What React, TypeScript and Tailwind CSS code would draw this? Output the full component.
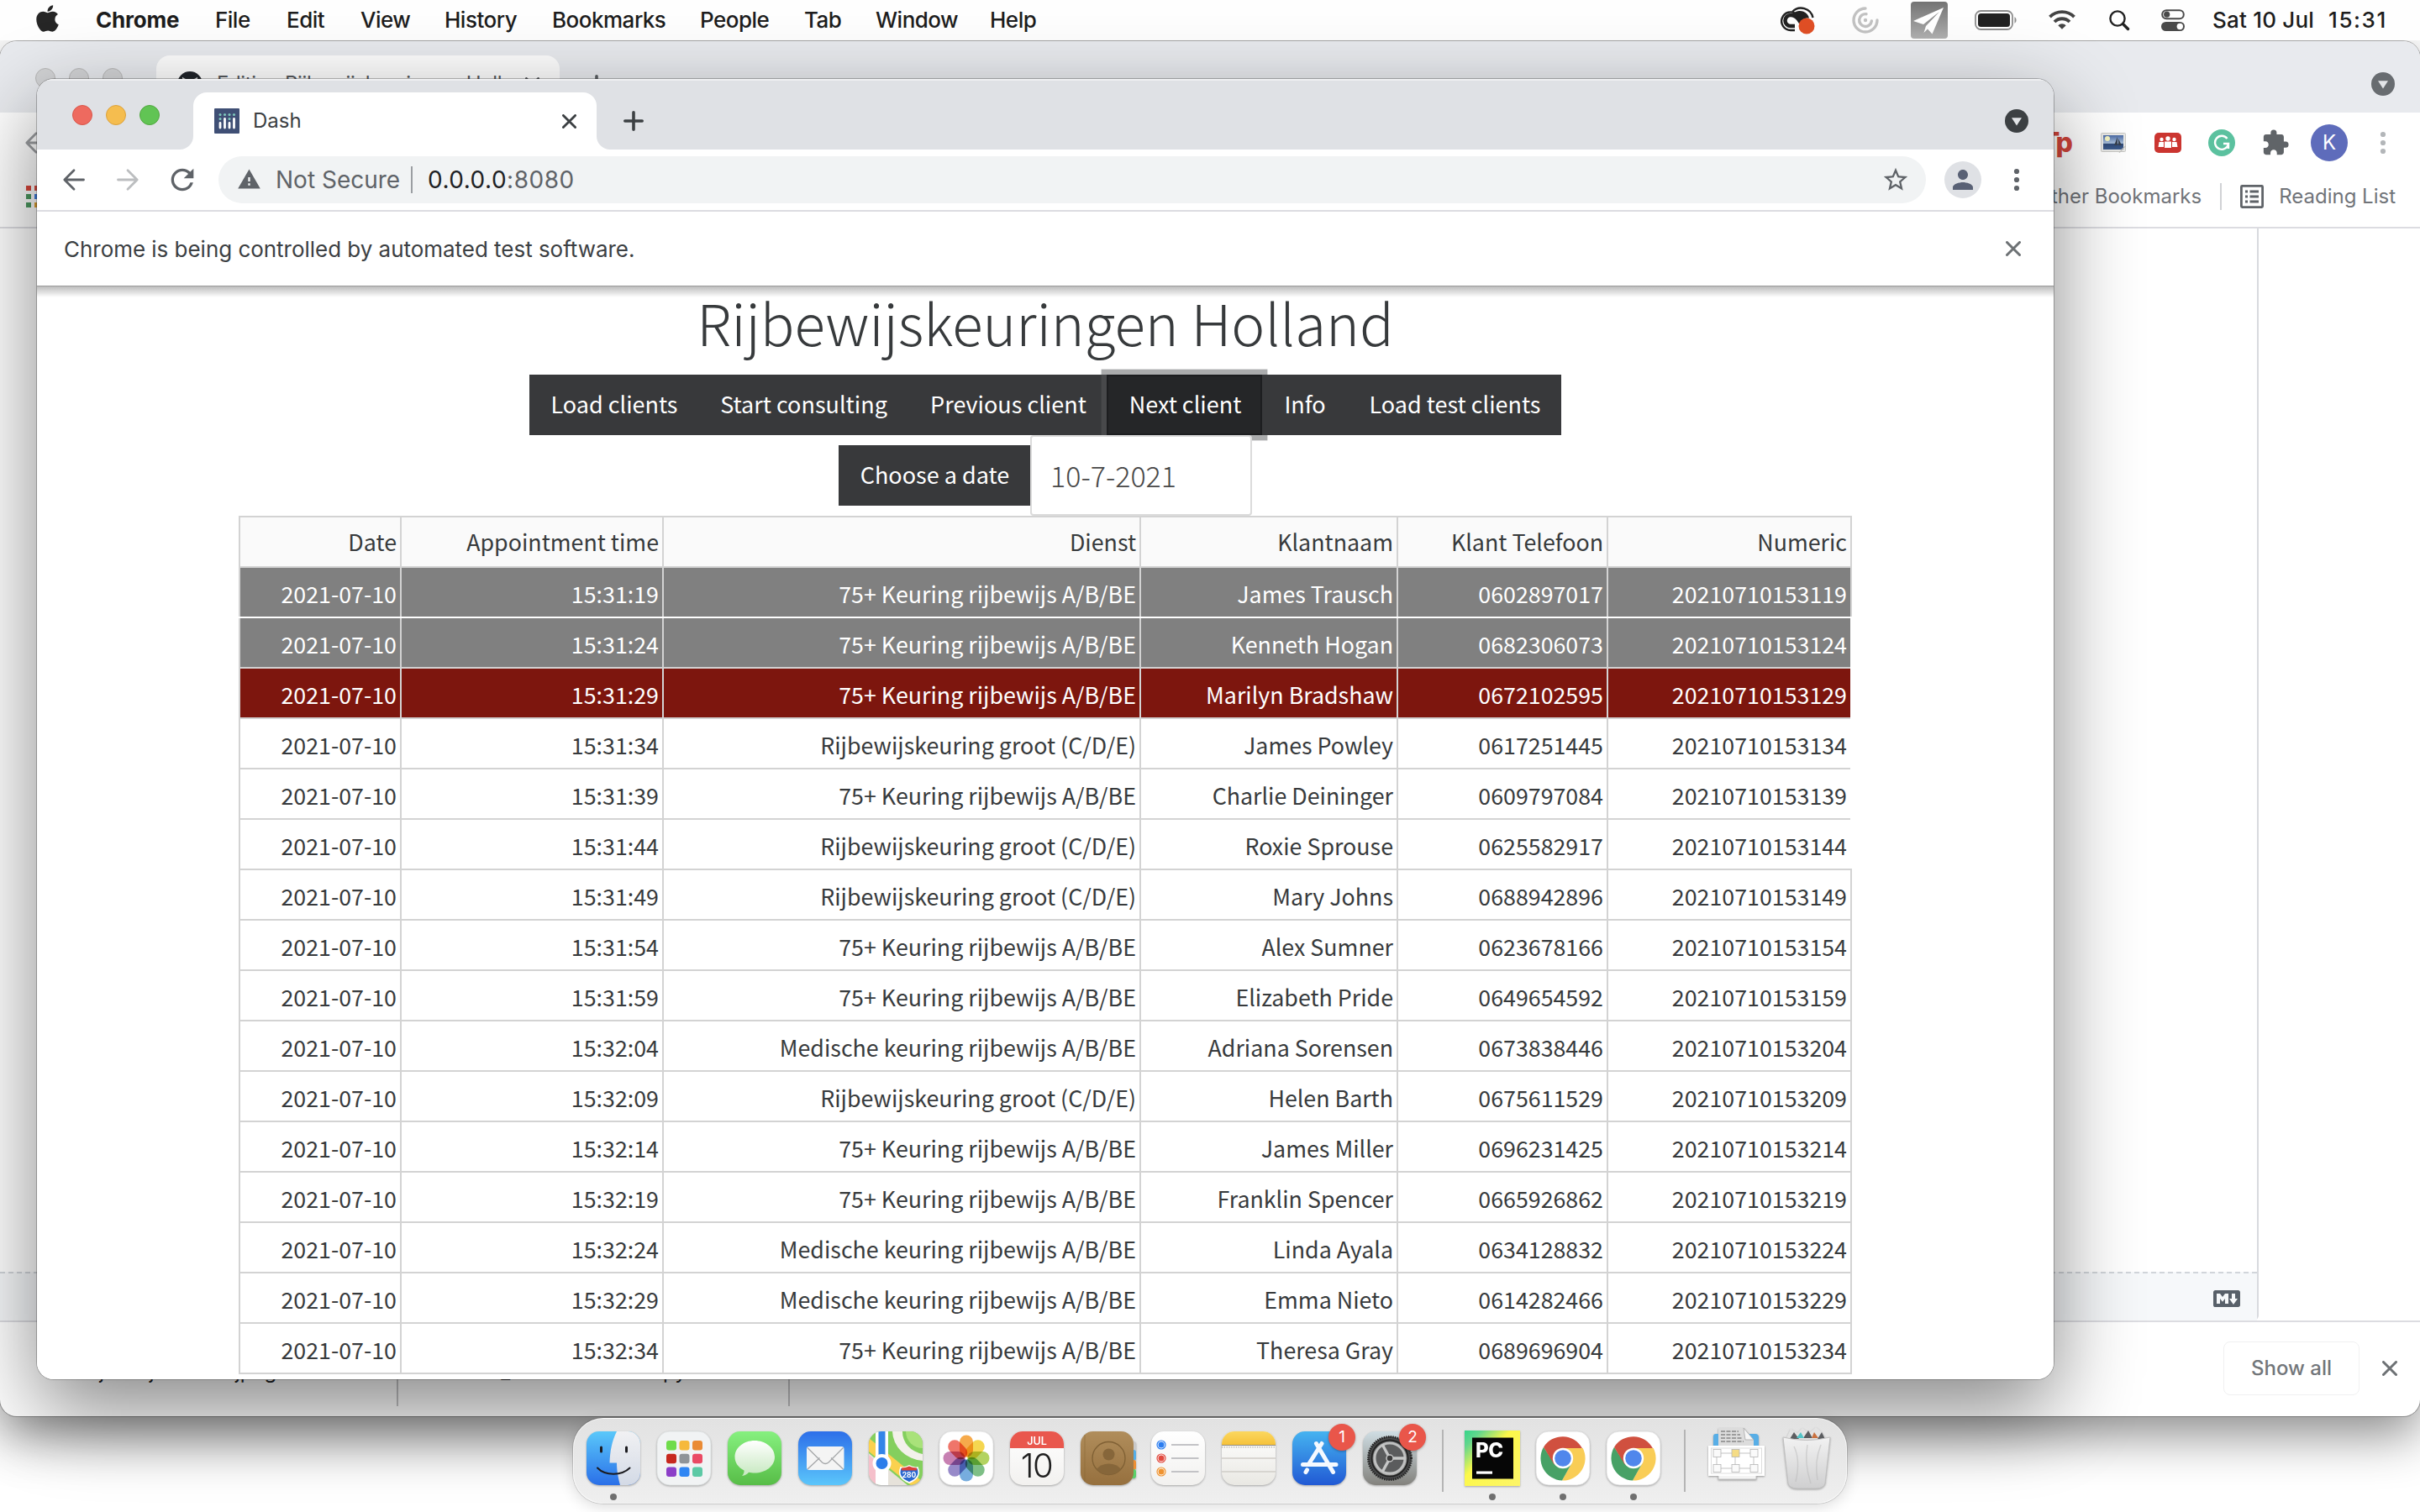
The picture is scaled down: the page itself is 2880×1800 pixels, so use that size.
import React from "react";
import { FaApple } from "react-icons/fa";
import { MdExtension, MdPerson, MdRefresh, MdStarBorder, MdWarning } from "react-icons/md";

const menus: [string, string][] = [
  ["File", "w-[85px]"],
  ["Edit", "w-[88px]"],
  ["View", "w-[100px]"],
  ["History", "w-[128px]"],
  ["Bookmarks", "w-[176px]"],
  ["People", "w-[124px]"],
  ["Tab", "w-[85px]"],
  ["Window", "w-[136px]"],
  ["Help", "w-[80px]"],
];

const A = "75+ Keuring rijbewijs A/B/BE";
const B = "Rijbewijskeuring groot (C/D/E)";
const C = "Medische keuring rijbewijs A/B/BE";

const rows: [string, string, string, string][] = [
  ["15:31:19", A, "James Trausch", "0602897017"],
  ["15:31:24", A, "Kenneth Hogan", "0682306073"],
  ["15:31:29", A, "Marilyn Bradshaw", "0672102595"],
  ["15:31:34", B, "James Powley", "0617251445"],
  ["15:31:39", A, "Charlie Deininger", "0609797084"],
  ["15:31:44", B, "Roxie Sprouse", "0625582917"],
  ["15:31:49", B, "Mary Johns", "0688942896"],
  ["15:31:54", A, "Alex Sumner", "0623678166"],
  ["15:31:59", A, "Elizabeth Pride", "0649654592"],
  ["15:32:04", C, "Adriana Sorensen", "0673838446"],
  ["15:32:09", B, "Helen Barth", "0675611529"],
  ["15:32:14", A, "James Miller", "0696231425"],
  ["15:32:19", A, "Franklin Spencer", "0665926862"],
  ["15:32:24", C, "Linda Ayala", "0634128832"],
  ["15:32:29", C, "Emma Nieto", "0614282466"],
  ["15:32:34", A, "Theresa Gray", "0689696904"],
];

function Cross({ size, className, w = 3 }: { size: number; className?: string; w?: number }) {
  return (
    <svg width={size} height={size} viewBox="0 0 18 18" className={className} fill="none" stroke="currentColor" strokeWidth={w} strokeLinecap="round">
      <path d="M1.5 1.5 16.5 16.5M16.5 1.5 1.5 16.5" />
    </svg>
  );
}

function Plus({ className }: { className?: string }) {
  return (
    <svg width="24" height="24" viewBox="0 0 24 24" className={className} fill="none" stroke="currentColor" strokeWidth="3.6" strokeLinecap="round">
      <path d="M12 1.8v20.4M1.8 12h20.4" />
    </svg>
  );
}

function Caret({ fill }: { fill: string }) {
  return (
    <svg width="28" height="28" viewBox="0 0 28 28">
      <circle cx="14" cy="14" r="14" fill={fill} />
      <path d="M8 10.2h12L14 19.5z" fill="#e3e5e8" />
    </svg>
  );
}

function Dots({ color }: { color: string }) {
  return (
    <svg width="8" height="28" viewBox="0 0 8 28" fill={color}>
      <circle cx="4" cy="4" r="3.1" />
      <circle cx="4" cy="14" r="3.1" />
      <circle cx="4" cy="24" r="3.1" />
    </svg>
  );
}

function BackArrow({ color, flip }: { color: string; flip?: boolean }) {
  return (
    <svg width="28" height="28" viewBox="0 0 28 28" fill="none" stroke={color} strokeWidth="2.8" strokeLinecap="round" strokeLinejoin="round" className={flip ? "-scale-x-100" : ""}>
      <path d="M25.5 14H3M14 2.8 2.8 14 14 25.2" />
    </svg>
  );
}

function MenuBar() {
  return (
    <div className="flex h-12 w-full items-center bg-[#fefefe] text-[26px] font-medium tracking-[-0.5px] text-[#1d1d1d]">
      <FaApple className="ml-[43px] h-[36px] w-[27px] -translate-y-[2px] text-[#262626]" />
      <span className="mt-[-2px] ml-[44px] w-[142px] font-bold tracking-[-0.2px]">Chrome</span>
      {menus.map(([m, w]) => (
        <span key={m} className={`mt-[-2px] ${w}`}>
          {m}
        </span>
      ))}
      <div className="ml-[861px] flex items-center">
        <svg width="42" height="34" viewBox="0 0 42 34" className="translate-y-[1px]">
          <g fill="none" stroke="#222" strokeWidth="2.4">
            <path d="M14 6A14.5 14.5 0 0 1 38.5 13" />
            <path d="M17 28H12A10.8 10.8 0 1 1 19 9" />
          </g>
          <path d="M17 6.5A11.5 11.5 0 0 1 34 13.5C30 13 26 15 24 18L20 12.5C17 9 12 10 12 10Z" fill="#222" />
          <path d="M17 23H12A6.5 6.5 0 0 1 12 10C19 9.500 22 16 24 19" fill="none" stroke="#222" strokeWidth="4.500" />
          <path d="M11.500 13A4 4 0 0 0 11.500 20H16L12.500 16Z" fill="#fff" />
          <circle cx="31" cy="23" r="9.500" fill="#e04f25" />
        </svg>
        <svg width="32" height="32" viewBox="0 0 32 32" className="ml-[43px]" fill="none" stroke="#c2c2c2" strokeWidth="3.400" strokeLinecap="round">
          <path d="M16 2A14 14 0 1 0 30 16" />
          <path d="M17 8.700A7.400 7.400 0 1 0 23.400 17" />
          <circle cx="16" cy="16" r="2.200" fill="#c2c2c2" stroke="none" />
        </svg>
        <svg width="44" height="44" viewBox="0 0 44 44" className="ml-[38px]">
          <defs>
            <linearGradient id="pl" x1="0" y1="0" x2="0" y2="1">
              <stop offset="0" stopColor="#737373" />
              <stop offset="1" stopColor="#b0b0b0" />
            </linearGradient>
          </defs>
          <rect width="44" height="44" rx="4" fill="url(#pl)" />
          <path d="M39 7 3 23l12 4L34 12 18 29l-2.500 8 4.500-4.500 5.500 6z" fill="#fff" />
        </svg>
        <svg width="51" height="24" viewBox="0 0 51 24" className="ml-[32px]">
          <rect x="1" y="1" width="44" height="22" rx="6.500" fill="none" stroke="#8d8d8d" strokeWidth="1.800" />
          <rect x="4" y="4" width="38" height="16" rx="3.500" fill="#222" />
          <path d="M47.500 8a4.800 4.800 0 0 1 0 8z" fill="#8d8d8d" />
        </svg>
        <svg width="32" height="24" viewBox="0 0 32 24" className="mt-[-2px] ml-[37px]" fill="none" stroke="#444" strokeWidth="3.800">
          <path d="M1.500 9.200A20.500 20.500 0 0 1 30.500 9.200" />
          <path d="M7 15A12.700 12.700 0 0 1 25 15" />
          <path d="M11.300 19.200A6.600 6.600 0 0 1 20.700 19.200L16 23.800Z" fill="#444" stroke="none" />
        </svg>
        <svg width="25" height="25" viewBox="0 0 25 25" className="ml-[40px]" fill="none" stroke="#222" strokeLinecap="round">
          <circle cx="10" cy="10" r="8.600" strokeWidth="2.400" />
          <path d="M16.500 16.500 22.500 22.500" strokeWidth="3.400" />
        </svg>
        <svg width="28" height="26" viewBox="0 0 28 26" className="ml-[37px]">
          <rect x="1.200" y="1.200" width="25.600" height="10" rx="5" fill="none" stroke="#4a4a4a" strokeWidth="2" />
          <circle cx="6.700" cy="6.200" r="3.600" fill="#4a4a4a" />
          <rect y="15" width="28" height="11" rx="5.500" fill="#4a4a4a" />
          <circle cx="22.300" cy="20.500" r="3.700" fill="#fff" />
        </svg>
        <span className="mt-[-2px] ml-[33px] w-[138px] tracking-[0.2px] whitespace-nowrap">Sat 10 Jul</span>
        <span className="mt-[-2px] tracking-[1.6px]">15:31</span>
      </div>
    </div>
  );
}

function Flare({ right, color }: { right?: boolean; color: string }) {
  return (
    <svg width="16" height="16" viewBox="0 0 16 16" className={right ? "absolute bottom-0 -right-4 -scale-x-100" : "absolute bottom-0 -left-4"}>
      <path d="M16 0V16H0A16 16 0 0 0 16 0Z" fill={color} />
    </svg>
  );
}

function BackWindow() {
  return (
    <div className="absolute top-[49px] left-0 flex h-[1637px] w-[2880px] flex-col overflow-hidden rounded-[20px] bg-white shadow-[0_0_0_1px_rgba(0,0,0,0.28),0_22px_60px_rgba(0,0,0,0.46)]">
      <div className="flex h-[85px] shrink-0 items-start bg-[#e8eaee]">
        <div className="mt-[32px] ml-[42px] flex gap-4">
          <i className="size-6 rounded-full border border-[#b8b8b8] bg-[#d3d4d6]" />
          <i className="size-6 rounded-full border border-[#b8b8b8] bg-[#d3d4d6]" />
          <i className="size-6 rounded-full border border-[#b8b8b8] bg-[#d3d4d6]" />
        </div>
        <div className="mt-[17px] ml-[40px] flex h-[68px] w-[480px] items-center rounded-t-[16px] bg-[#fdfdfd] pl-[25px] text-[24px] text-[#55585c]">
          <svg width="30" height="30" viewBox="0 0 30 30">
            <circle cx="15" cy="15" r="15" fill="#20242a" />
            <path d="M6 7l5 2.500q4-1 8 0L24 7v8q0 7-9 7t-9-7z" fill="#fff" />
          </svg>
          <span className="ml-[17px] tracking-[-0.4px] whitespace-nowrap">Editing Rijbewijskeuringen-Holl</span>
          <Cross size={17} className="mr-[24px] ml-auto" />
        </div>
        <Plus className="mt-[40px] ml-[32px] text-[#5b5e62]" />
        <div className="mt-[37px] mr-[30px] ml-auto">
          <Caret fill="#686c70" />
        </div>
      </div>
      <div className="flex h-[72px] shrink-0 items-center pr-[40px] pl-[29px]">
        <BackArrow color="#9b9da0" />
        <span className="ml-auto text-[32px] font-extrabold tracking-[-3px] text-[#d2453a]">Tp</span>
        <svg width="30" height="24" viewBox="0 0 30 24" className="ml-[36px]">
          <defs>
            <linearGradient id="sea" x1="0" y1="0" x2="0" y2="1">
              <stop offset="0" stopColor="#4a6aa5" />
              <stop offset=".55" stopColor="#a9c0dc" />
              <stop offset=".62" stopColor="#2f4a78" />
              <stop offset="1" stopColor="#3d5c8e" />
            </linearGradient>
          </defs>
          <rect x=".5" y=".5" width="29" height="22" rx="1" fill="#e9e9e6" stroke="#c9c9c6" />
          <rect x="3" y="3" width="24" height="17" fill="url(#sea)" />
          <circle cx="8" cy="7" r="3" fill="#f4f3c0" />
          <path d="M20 5v10h-4zM21 7l4 8h-4z" fill="#39424f" />
          <path d="M29.500 16 22 23.500q4-1 3-4z" fill="#f7f7f5" stroke="#b5b5b2" strokeWidth=".7" />
        </svg>
        <svg width="32" height="24" viewBox="0 0 32 24" className="ml-[34px]">
          <rect width="32" height="24" rx="5" fill="#cb3530" />
          <g fill="#fff">
            <circle cx="16" cy="7" r="2.700" />
            <circle cx="8.500" cy="8" r="2.200" />
            <circle cx="23.500" cy="8" r="2.200" />
            <path d="M12 10.500h8V18h-8zM4.500 17l1-6h5.500v6zM27.500 17l-1-6H21v6z" />
          </g>
        </svg>
        <span className="ml-[32px] flex size-8 items-center justify-center rounded-full bg-[#5bc19f]">
          <svg width="20" height="20" viewBox="0 0 20 20" fill="none" stroke="#fff" strokeWidth="2.400">
            <path d="M16.500 5A8 8 0 1 0 18 11H12M18 17V11" />
          </svg>
        </span>
        <MdExtension className="ml-[31px] size-[34px] text-[#606468]" />
        <span className="ml-[25px] flex size-11 items-center justify-center rounded-full bg-[#5e6cbb] text-[24px] text-white">K</span>
        <span className="ml-[38px]">
          <Dots color="#b3b6b9" />
        </span>
      </div>
      <div className="flex h-[66px] shrink-0 items-center border-b-2 border-[#dcdce1] pb-[8px] pl-[31px] text-[24px] text-[#717479]">
        <div className="grid grid-cols-3 gap-1">
          <i className="size-[6px] bg-[#d9473c]" />
          <i className="size-[6px] bg-[#d9473c]" />
          <i className="size-[6px] bg-[#d9473c]" />
          <i className="size-[6px] bg-[#4c9960]" />
          <i className="size-[6px] bg-[#3f7ee0]" />
          <i className="size-[6px] bg-[#e0a030]" />
          <i className="size-[6px] bg-[#4c9960]" />
          <i className="size-[6px] bg-[#e0a030]" />
          <i className="size-[6px] bg-[#e0a030]" />
        </div>
        <span className="ml-auto">Other Bookmarks</span>
        <i className="ml-[22px] h-8 w-[2px] bg-[#d0d2d5]" />
        <svg width="28" height="28" viewBox="0 0 28 28" className="mr-[18px] ml-[22px]" fill="none" stroke="#5f6368" strokeWidth="2.800">
          <rect x="1.400" y="1.400" width="25.200" height="25.200" rx="1" />
          <path d="M6 8h3M11.500 8H22M6 14h3M11.500 14H22M6 20h3M11.500 20H22" />
        </svg>
        <span className="mr-[29px]">Reading List</span>
      </div>
      <div className="flex h-[1302px] shrink-0 border-b-2 border-[#dcdce1]">
        <div className="flex w-[2688px] flex-col rounded-br-[6px] border-r-2 border-[#d8dade]">
          <div className="flex-1" />
          <div className="flex h-[58px] items-center justify-end border-t-2 border-dashed border-[#d1d5da] bg-[#f6f8fa] pt-1 pr-5">
            <svg width="32" height="20" viewBox="0 3 16 10" fill="#586069">
              <path d="M14.850 3H1.150C.52 3 0 3.520 0 4.150v7.690C0 12.480.52 13 1.150 13h13.690c.64 0 1.150-.52 1.150-1.150v-7.700C16 3.520 15.480 3 14.850 3zM9 11H7V8L5.500 9.920 4 8v3H2V5h2l1.500 2L7 5h2v6zm2.990.5L9.500 8H11V5h2v3h1.500l-2.510 3.500z" />
            </svg>
          </div>
        </div>
      </div>
      <div className="flex flex-1 items-center text-[24px] text-[#202124]">
        <div className="mt-[-12px] flex h-[100px] w-[474px] shrink-0 items-center border-r-2 border-[#c4c4c6] pt-[18px] pl-[97px]">
          <span>Rijbewijskeuri....jpeg</span>
        </div>
        <div className="mt-[-12px] flex h-[100px] w-[466px] shrink-0 items-center border-r-2 border-[#c4c4c6] pt-[18px] pl-[80px]">
          <span>test_automationload.py</span>
        </div>
        <div className="mt-[-3px] mr-[27px] ml-auto flex items-center text-[#72767a]">
          <span className="flex h-16 w-[162px] items-center justify-center rounded-[8px] border border-[#f0f0f1] font-medium">Show all</span>
          <Cross size={18} className="ml-[27px] text-[#6d7174]" />
        </div>
      </div>
    </div>
  );
}

const cell = "flex items-center justify-end border-l-2 border-[#d3d3d3] pr-[4px]";

function Row({ values, className, closed, header }: { values: string[]; className: string; closed: boolean; header?: boolean }) {
  return (
    <div className={`grid h-[60px] grid-cols-[192px_312px_568px_306px_250px_290px] border-r-[#d3d3d3] ${closed ? "w-[1920px] border-r-2" : "w-[1918px]"} ${className}`}>
      {values.map((v, i) => (
        <div key={i} className={cell}>
          <span className={header ? "" : "translate-y-[2px]"}>{v}</span>
        </div>
      ))}
    </div>
  );
}

const btn = "flex h-[72px] items-center justify-center bg-[#38393b] pb-[1px] whitespace-nowrap";

function Page() {
  return (
    <div className="flex flex-1 flex-col items-center bg-white font-['Noto_Sans_CJK_SC','Noto_Sans',sans-serif] text-[27px] text-[#373a3c]">
      <h1 className="h-[105px] text-[67.4px] leading-[84px] font-light">Rijbewijskeuringen Holland</h1>
      <div className="flex text-white">
        <div className={`${btn} w-[202px]`}>Load clients</div>
        <div className={`${btn} w-[249px]`}>Start consulting</div>
        <div className={`${btn} w-[236px] pl-[2px]`}>Previous client</div>
        <div className="relative flex h-[72px] w-[185px] items-center justify-center border-2 border-[#1d1e20] bg-[#252628] pb-[1px] pl-[2px] shadow-[0_0_0_6.4px_rgba(88,89,91,0.5)]">Next client</div>
        <div className={`${btn} relative w-[102px]`}>Info</div>
        <div className={`${btn} relative w-[254px] pl-[1px]`}>Load test clients</div>
      </div>
      <div className="relative flex items-center">
        <div className={`${btn} w-[228px] pl-[1px] text-white`}>Choose a date</div>
        <div className="flex h-24 w-[264px] items-center rounded-[4px] border-2 border-[#dbdbdb] bg-white pb-[2px] pl-[22px] text-[34px] font-light text-[#484848]">10-7-2021</div>
      </div>
      <div className="w-[1920px] text-[26.8px]">
        <Row header closed className="border-t-2 border-[#d3d3d3] bg-[#fafafa]" values={["Date", "Appointment time", "Dienst", "Klantnaam", "Klant Telefoon", "Numeric"]} />
        {rows.map(([t, d, n, p], i) => (
          <Row
            key={t}
            closed={i === 0 || i > 5}
            values={["2021-07-10", t, d, n, p, "20210710" + t.replaceAll(":", "")]}
            className={
              i === 0
                ? "border-t-2 border-[#d3d3d3] bg-[#808080] text-white"
                : i === 1
                  ? "border-t-2 border-white bg-[#808080] text-white"
                  : i === 2
                    ? "border-t-2 border-[#d3d3d3] bg-[#7d160e] text-white"
                    : "border-t-2 border-[#d3d3d3]"
            }
          />
        ))}
        <div className="h-[2px] bg-[#d3d3d3]" />
      </div>
    </div>
  );
}

function FrontWindow() {
  return (
    <div className="absolute top-[94px] left-[44px] flex h-[1548px] w-[2400px] flex-col overflow-hidden rounded-[20px] bg-white shadow-[0_0_0_1px_rgba(0,0,0,0.25),0_36px_100px_rgba(0,0,0,0.48)]">
      <div className="flex h-[84px] shrink-0 items-end border-t-2 border-[#eff0f2] bg-[#dfe1e5]">
        <div className="mb-[29px] ml-[42px] flex gap-4">
          <i className="size-6 rounded-full border border-[#d95549] bg-[#ee6a5f]" />
          <i className="size-6 rounded-full border border-[#dca23c] bg-[#f5bd4f]" />
          <i className="size-6 rounded-full border border-[#50a73e] bg-[#61c454]" />
        </div>
        <div className="relative ml-[40px] flex h-[68px] w-[480px] items-center rounded-t-[16px] bg-white pl-[25px] text-[24px] text-[#3c4043]">
          <Flare color="#fff" />
          <Flare color="#fff" right />
          <svg width="30" height="30" viewBox="0 0 30 30">
            <rect width="30" height="30" rx="1" fill="#3f4f75" />
            <g fill="#7fc9bd">
              <circle cx="7" cy="7.500" r="1.500" />
              <circle cx="12.500" cy="7.500" r="1.500" />
              <circle cx="18" cy="7.500" r="1.500" />
              <circle cx="23.500" cy="7.500" r="1.500" />
              <circle cx="7" cy="12.500" r="1.500" />
              <circle cx="18" cy="12.500" r="1.500" />
            </g>
            <path d="M7 17.500v5.500M12.500 12.500V23M18 17.500v5.500M23.500 12.500V23" stroke="#fff" strokeWidth="2.800" strokeLinecap="round" />
          </svg>
          <span className="ml-[16px]">Dash</span>
          <Cross size={17} className="mr-[24px] ml-auto text-[#3c4043]" />
        </div>
        <Plus className="mb-[22px] ml-[32px] text-[#3c4043]" />
        <div className="mr-[30px] mb-[20px] ml-auto">
          <Caret fill="#3c4043" />
        </div>
      </div>
      <div className="flex h-[74px] shrink-0 items-center border-b-2 border-[#dcdce1] pl-[30px]">
        <BackArrow color="#5f6368" />
        <span className="ml-9">
          <BackArrow color="#bcbec0" flip />
        </span>
        <MdRefresh className="ml-[31px] size-[40px] text-[#5f6368]" />
        <div className="ml-[23px] flex h-14 w-[2032px] items-center rounded-full bg-[#f1f3f4] pl-[22px] text-[28px] text-[#5f6368]">
          <MdWarning className="size-[29px] -translate-y-[1px]" />
          <span className="ml-[17px] w-[161px]">Not Secure</span>
          <i className="h-8 w-[2px] bg-[#9b9ea2]" />
          <span className="ml-[18px] tracking-[0.5px]">
            <span className="text-[#202124]">0.0.0.0</span>:8080
          </span>
          <MdStarBorder className="mr-[19px] ml-auto size-[34px]" />
        </div>
        <span className="ml-[22px] flex size-11 items-center justify-center rounded-full bg-[#dfe1e5]">
          <MdPerson className="size-[36px] text-[#596175]" />
        </span>
        <span className="ml-[38px]">
          <Dots color="#5f6368" />
        </span>
      </div>
      <div className="flex h-[88px] shrink-0 items-center pr-[39px] pl-[32px] text-[26px] tracking-[-0.03px] text-[#3c4043]">
        Chrome is being controlled by automated test software.
        <Cross size={18} className="ml-auto text-[#6d7174]" />
      </div>
      <div className="relative h-0 shrink-0">
        <div className="absolute inset-x-0 top-0 h-[14px] border-t border-[#9a9a9a] bg-linear-to-b from-[#bdbdbd] to-transparent" />
      </div>
      <div className="h-px shrink-0" />
      <Page />
    </div>
  );
}

function Tile({ children, dot, badge }: { children: React.ReactNode; dot?: boolean; badge?: string }) {
  return (
    <div className="relative mr-5 flex flex-col items-center">
      <svg width="64" height="64" viewBox="0 0 64 64" className="overflow-visible drop-shadow-[0_1px_1px_rgba(0,0,0,0.3)]">
        {children}
      </svg>
      {dot && <i className="mt-[10px] size-2 rounded-full bg-[#6f6f6f]" />}
      {badge && <span className="absolute -top-[9px] -right-[11px] flex size-[32px] items-center justify-center rounded-full bg-[#e9564a] text-[19px] text-white shadow-[0_1px_3px_rgba(0,0,0,0.3)]">{badge}</span>}
    </div>
  );
}

function Base({ fill, stroke }: { fill: string; stroke?: string }) {
  return <rect width="64" height="64" rx="15" fill={fill} stroke={stroke} strokeWidth=".8" />;
}

const gradients: [string, string, string][] = [
  ["gFinder", "#5ac8fa", "#2a6fe8"],
  ["gFace", "#f1f1f3", "#d3dae6"],
  ["gMsg", "#86f07f", "#57bd47"],
  ["gBubble", "#ffffff", "#c6e8bf"],
  ["gMail", "#2d6fe9", "#5bc6fb"],
  ["gCard", "#ffffff", "#f2f1ef"],
  ["gContacts", "#b08d5b", "#96703e"],
  ["gStore", "#45b3f0", "#2159d4"],
  ["gPrefs", "#cfdde3", "#83827d"],
  ["gNotes", "#fbd75f", "#f6c23a"],
  ["gPaper", "#ffffff", "#e9e8e3"],
  ["gWheel", "#5a5c5e", "#a8a8a6"],
  ["gTrash", "#f2f2f2", "#cfcfd0"],
];

function Chrome() {
  return (
    <g>
      <Base fill="#fff" stroke="#dadada" />
      <circle cx="32" cy="32" r="26.500" fill="#fff" />
      <path d="M32 32 9.100 18.700A26.500 26.500 0 0 1 54.900 20H32Z" fill="#d0503f" />
      <path d="M32 20H55.700A26.500 26.500 0 0 1 31 58.500L42.400 38Z" fill="#f9cd56" />
      <path d="M9 18.800 21.600 38 42.400 38 31 58.500A26.500 26.500 0 0 1 9 18.800Z" fill="#47a166" />
      <path d="M9 18.800 21.600 39.500 32 20Z" fill="#d0503f" />
      <circle cx="32" cy="32" r="12.200" fill="#fff" />
      <circle cx="32" cy="32" r="9.800" fill="#5087ec" />
    </g>
  );
}

const launch = ["#6fdc4b", "#f6b93b", "#ea8b35", "#c7281e", "#8f9498", "#ea4a64", "#8c3fc8", "#2f86f3", "#5cc9a5"];
const petals = ["#f49b2b", "#f3cf31", "#a6cb45", "#67b471", "#5f9fd8", "#8576c0", "#bd6aa4", "#ec5d50"];

function Dock() {
  return (
    <div className="absolute top-[1688px] left-[682px] flex h-[102px] w-[1516px] items-start rounded-[36px] border border-white/60 bg-linear-to-b from-[#e2e2e2] to-[#efefef] pt-[15px] pl-[15px] shadow-[0_0_0_1px_rgba(0,0,0,0.13),0_4px_18px_rgba(0,0,0,0.14)]">
      <svg width="0" height="0" className="absolute">
        <defs>
          {gradients.map(([id, a, b]) => (
            <linearGradient key={id} id={id} x1="0" y1="0" x2="0" y2="1">
              <stop offset="0" stopColor={a} />
              <stop offset="1" stopColor={b} />
            </linearGradient>
          ))}
          <linearGradient id="gPC" x1="0" y1="0" x2="1" y2="1">
            <stop offset="0" stopColor="#35d58a" />
            <stop offset=".15" stopColor="#62d68d" />
            <stop offset=".42" stopColor="#fcf84a" />
            <stop offset="1" stopColor="#fdf56a" />
          </linearGradient>
          <clipPath id="tile">
            <rect width="64" height="64" rx="15" />
          </clipPath>
        </defs>
      </svg>
      <Tile dot>
        <Base fill="url(#gFinder)" />
        <g clipPath="url(#tile)">
          <path d="M36 0C30 12 28 24 27.500 37.500H36C36 48 38 56 40 64H64V0Z" fill="url(#gFace)" />
        </g>
        <g fill="none" stroke="#1b1b1f" strokeLinecap="round">
          <path d="M17.500 19v5M47.500 19v5" strokeWidth="3" />
          <path d="M13 43.500C22 53 42 53 51.500 43.500" strokeWidth="2" />
        </g>
      </Tile>
      <Tile>
        <Base fill="#f1f3f4" stroke="#dcdfe0" />
        {launch.map((c, i) => (
          <rect key={c} x={11 + (i % 3) * 15.5} y={11 + Math.floor(i / 3) * 15.7} width="12" height="11.600" rx="3" fill={c} />
        ))}
      </Tile>
      <Tile>
        <Base fill="url(#gMsg)" />
        <path d="M32 11C45 11 56 19.500 56 30.500S45 49.500 32 49.500C29.500 49.500 27 49.200 25 48.700 23.500 51 20.500 52.500 17 53 19 51 19.800 48.500 19.500 46.500 12.500 43 8.500 37 8.500 30.500 8.500 19.500 19 11 32 11Z" fill="url(#gBubble)" />
      </Tile>
      <Tile>
        <Base fill="url(#gMail)" />
        <rect x="10" y="18" width="44.500" height="28" rx="3" fill="#f4f4f4" />
        <path d="M11 45 25.500 31.500M53.500 45 39 31.500M11 19.500 28.500 37Q32.200 40 36 37L53.500 19.500" fill="none" stroke="#a5a7a9" strokeWidth="1.300" />
      </Tile>
      <Tile>
        <g clipPath="url(#tile)">
          <rect width="64" height="64" fill="#84cf5e" />
          <path d="M28 0A40 36 0 0 0 64 35V27A30 27 0 0 1 40 0Z" fill="#f3f1ea" />
          <path d="M44 0A20 20 0 0 0 64 20V0Z" fill="#a9e27a" />
          <path d="M0 8 64 60V64H50L0 24Z" fill="#fbd14f" />
          <path d="M0 26 46 64H0Z" fill="#e6e2da" />
          <path d="M0 28 10 37V64H0Z" fill="#f5c0cb" />
          <rect x="8" width="15" height="64" fill="#fff" />
          <rect x="11.500" width="8" height="34" fill="#3485e8" />
        </g>
        <circle cx="15.500" cy="38" r="11" fill="#fff" />
        <circle cx="15.500" cy="38" r="7" fill="#2c7eea" />
        <path d="M38 43q5 1 10-2 5 3 10 2 5 12-10 18-15-6-10-18Z" fill="#2a68cf" stroke="#fff" strokeWidth="1.600" />
        <path d="M39 43.500q5 0 9-2 4 2 9 2v3H39Z" fill="#dc4238" />
        <text x="48" y="55" textAnchor="middle" fontSize="8.500" fontWeight="700" fill="#fff">280</text>
      </Tile>
      <Tile>
        <Base fill="#fff" stroke="#e3e3e3" />
        {petals.map((c, i) => (
          <rect key={c} x="24" y="4.500" width="16" height="26" rx="8" fill={c} fillOpacity=".85" className="mix-blend-multiply" transform={`rotate(${i * 45} 32 32)`} />
        ))}
      </Tile>
      <Tile>
        <Base fill="url(#gCard)" />
        <path d="M0 20V15A15 15 0 0 1 15 0H49A15 15 0 0 1 64 15V20Z" fill="#e9574d" />
        <text x="32" y="15.500" textAnchor="middle" fontSize="12.500" fontWeight="600" fill="#fff">JUL</text>
        <text x="31.500" y="54.500" textAnchor="middle" fontSize="40" fontWeight="300" letterSpacing="-1.500" fill="#1f1f1f">10</text>
      </Tile>
      <Tile>
        <rect x="50" y="12" width="16" height="15" rx="3" fill="#c9c9c9" />
        <rect x="50" y="22" width="16" height="13" rx="3" fill="#55aee8" />
        <rect x="50" y="34" width="16" height="12" rx="3" fill="#ee8f33" />
        <rect x="50" y="45" width="16" height="11" rx="3" fill="#5ad06a" />
        <rect width="63" height="64" rx="15" fill="url(#gContacts)" />
        <path d="M5 4V60" stroke="#86642f" strokeOpacity=".5" strokeWidth="1" />
        <circle cx="33.500" cy="32" r="19.500" fill="none" stroke="#7f6034" strokeWidth="1.300" />
        <circle cx="33.500" cy="27.500" r="7" fill="#86663a" />
        <path d="M19 45Q24 38.500 33.500 38.500T48 45Q42 51.500 33.500 51.500T19 45Z" fill="#86663a" />
      </Tile>
      <Tile>
        <Base fill="url(#gCard)" />
        <path d="M24 16H56.500M24 32H56.500M24 48H56.500" stroke="#c3c3c6" strokeWidth="1.800" />
        {["#2b7df0", "#e14a3f", "#ef9330"].map((c, i) => (
          <g key={c}>
            <circle cx="12" cy={16 + i * 16} r="5" fill="#fff" stroke={c} strokeWidth="1.200" />
            <circle cx="12" cy={16 + i * 16} r="3.500" fill={c} />
          </g>
        ))}
      </Tile>
      <Tile>
        <Base fill="url(#gPaper)" />
        <path d="M0 16V15A15 15 0 0 1 15 0H49A15 15 0 0 1 64 15V16Z" fill="url(#gNotes)" />
        <path d="M0 16.500H64" stroke="#8f8a7c" strokeWidth="1" />
        <path d="M0 18.800H64" stroke="#b5b2aa" strokeWidth="1.500" strokeDasharray="1.200 1.600" />
        <path d="M0 32H64M0 48H64" stroke="#cfcdc7" strokeWidth="1.300" />
      </Tile>
      <Tile badge="1">
        <Base fill="url(#gStore)" />
        <g fill="none" stroke="#f5f9ff" strokeWidth="5" strokeLinecap="round">
          <path d="M35 14.500 19.500 39M28.500 14.500 48.500 48.500M12.500 39.500H52M17.500 46 16 48.500" />
        </g>
      </Tile>
      <Tile badge="2">
        <Base fill="url(#gPrefs)" />
        <circle cx="32" cy="32" r="26" fill="#4a4b4c" />
        <circle cx="32" cy="32" r="25.500" fill="none" stroke="#222" strokeWidth="3" strokeDasharray="1.300 1.370" />
        <circle cx="32" cy="32" r="21.500" fill="url(#gWheel)" stroke="#232323" strokeWidth="2" />
        <circle cx="32" cy="32" r="18" fill="#5b5c5d" stroke="#bfc0c0" strokeWidth="3" />
        <path d="M32 32 23 15.500M32 32H51M32 32 23 48.500" stroke="#c6c7c7" strokeWidth="3.400" />
        <circle cx="32" cy="32" r="4" fill="#3c3c3c" stroke="#c6c7c7" strokeWidth="1.500" />
      </Tile>
      <i className="mt-[6px] mr-[26px] ml-[10px] h-[74px] w-[2px] shrink-0 -translate-y-[8px] bg-[#b5b5b5]" />
      <Tile dot>
        <rect x="-1" y="-1" width="66" height="66" fill="url(#gPC)" />
        <rect x="8" y="7.500" width="49" height="49" fill="#060606" />
        <text x="12" y="31" fontSize="24" fontWeight="800" letterSpacing="-.4" fill="#fff">PC</text>
        <rect x="13" y="47.500" width="19" height="3.200" fill="#fff" />
      </Tile>
      <Tile dot>
        <Chrome />
      </Tile>
      <Tile dot>
        <Chrome />
      </Tile>
      <i className="mt-[6px] mr-[27px] ml-[8px] h-[74px] w-[2px] shrink-0 -translate-y-[8px] bg-[#b5b5b5]" />
      <svg width="68" height="64" viewBox="0 0 68 64" className="-mt-1 shrink-0 drop-shadow-[0_1px_1px_rgba(0,0,0,0.35)]">
        <path d="M6 10q0-3 3-3h47q4 0 4 4v14H6Z" fill="#58aee6" />
        <path d="M12 0H42L54 14V24H12Z" fill="#dcdcdc" />
        <path d="M15 4H36M15 8H38M15 12H40M15 16H42" stroke="#9c9c9c" strokeWidth="1.800" strokeDasharray="5 1.500" />
        <path d="M42 0 54 14H44Z" fill="#f7f7f7" stroke="#aaa" strokeWidth=".8" />
        <rect x="12" y="55" width="45" height="6" fill="#f4f4f4" stroke="#c2c2c2" />
        <rect x="0" y="21" width="67" height="36" fill="#fff" />
        <rect x="3.500" y="24" width="60" height="30" fill="none" stroke="#dedede" />
        <g fill="#fafafa" stroke="#b4b4b4" strokeWidth=".8">
          <path d="M10 33v12M32 33v12M54 33v12M14 30h36M14 48h36" />
          <rect x="6" y="25.500" width="9" height="9" />
          <rect x="28" y="25.500" width="9" height="9" fill="#f5dc85" />
          <rect x="50" y="25.500" width="9" height="9" />
          <rect x="6" y="43.500" width="9" height="9" />
          <rect x="28" y="43.500" width="9" height="9" />
          <rect x="50" y="43.500" width="9" height="9" />
        </g>
      </svg>
      <svg width="58" height="76" viewBox="0 0 58 76" className="-mt-[6px] ml-[20px] shrink-0 drop-shadow-[0_1px_1px_rgba(0,0,0,0.3)]">
        <path d="M4 16 10 3l8 5 6-6 8 6 8-7 7 6 6 9Z" fill="#e3e3e3" />
        <path d="M9 15l5-8 6 8zM25 14l6-9 5 9zM42 15l5-8 4 8z" fill="#5b5d60" />
        <path d="M17 14l5-7 4 7z" fill="#52c4c7" />
        <path d="M35 14l3-7 5 7z" fill="#c9713f" />
        <path d="M1 13Q29 20 57 13L51 68Q49 74 40 74H18Q9 74 7 68Z" fill="url(#gTrash)" stroke="#c0c0c0" strokeWidth="1" />
        <path d="M14 24q8 16 2 42M30 22q-4 22 4 46M46 22q-8 20-4 42" fill="none" stroke="#bcbcbc" strokeOpacity=".55" strokeWidth="1.500" />
      </svg>
    </div>
  );
}

export default function App() {
  return (
    <div className="relative h-[1800px] w-[2880px] overflow-hidden bg-white font-['Inter','Liberation_Sans',sans-serif]">
      <BackWindow />
      <div className="relative">
        <MenuBar />
      </div>
      <FrontWindow />
      <Dock />
    </div>
  );
}
